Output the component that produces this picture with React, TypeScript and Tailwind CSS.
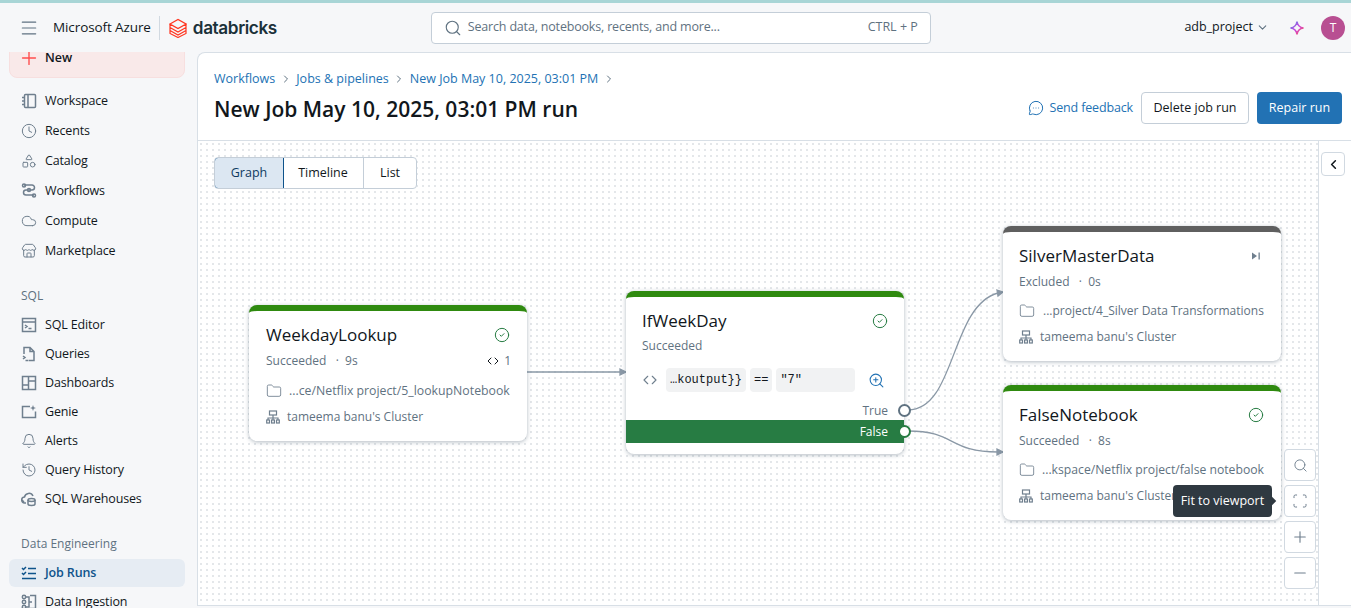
import { Menu, Plus, Clock, Shapes, Cloud, Store, Search, ChevronDown, ChevronRight, ChevronLeft, MessageCircleMore, CircleCheck, Folder, ChevronsLeftRight, ZoomIn, Minus, Bell, History, Code, Scan } from 'lucide-react'
import type { ReactNode } from 'react'

const stroke = { fill: 'none', stroke: 'currentColor', strokeWidth: 1.5 }

function Ico({ children }: { children: ReactNode }) {
  return <svg width="16" height="16" viewBox="0 0 16 16" {...stroke} className="shrink-0">{children}</svg>
}

const WorkspaceIcon = <Ico><rect x="3.5" y="1.5" width="11" height="13" rx="1" /><path d="M7 1.5v13M1 4.5h3M1 8h3M1 11.5h3" /></Ico>
const WorkflowsIcon = <Ico><path d="M3 2h8a2.500 2.500 0 0 1 0 5H5a2.500 2.500 0 0 0 0 5h8" /><circle cx="3" cy="2.500" r="1.500" /><circle cx="8" cy="7" r="1.500" /><circle cx="13" cy="12.500" r="1.500" /></Ico>
const SqlEditorIcon = <Ico><rect x="1.500" y="1.500" width="13" height="13" /><path d="M1.500 5h13M4 8l2 1.500L4 11M7.500 11.500h3" /></Ico>
const QueriesIcon = <Ico><path d="M3 8V1.500h6L13 5.500V14.500H8M9 1.500v4h4" /><path d="M2 10l2 1.500L2 13M4.500 14.500h3" /></Ico>
const DashboardsIcon = <Ico><rect x="1.500" y="1.500" width="13" height="13" /><path d="M7.500 1.500v13M1.500 10h6M7.500 6h7" /></Ico>
const GenieIcon = <Ico><path d="M9 2.500H1.500v11h13V7.500" /><path d="M12 1l.8 2.200L15 4l-2.200.8L12 7l-.8-2.200L9 4l2.200-.8z" fill="currentColor" stroke="none" /></Ico>
const WarehouseIcon = <Ico><path d="M5 12H4a3 3 0 0 1-.5-6A4.500 4.500 0 0 1 12 5" /><ellipse cx="10.500" cy="9" rx="3.500" ry="1.500" /><path d="M7 9v4c0 .8 1.500 1.500 3.500 1.500s3.500-.7 3.500-1.500V9" /><path d="M1 9l2 2" /></Ico>
const IngestionIcon = <Ico><circle cx="3" cy="3" r="1.700" /><circle cx="3" cy="8" r="1.700" /><circle cx="3" cy="13" r="1.700" /><path d="M9 1.500h5.500v13H9M5 3h3v10H5M8 8h3" /></Ico>
const JobRunsIcon = <Ico><path d="M1 3l1.500 1.500L5 2M1 8l1.500 1.500L5 7M7 3.500h8M7 8.500h8M1 13.500h14" /></Ico>

function NavItem({ icon, label, active }: { icon: ReactNode; label: string; active?: boolean }) {
  return (
    <div className={`flex h-7 items-center gap-2 rounded-md pl-3 text-[12.500px] tracking-[-0.15px] ${active ? 'bg-[#e6ecf3] font-semibold text-[#0e538b]' : 'text-[#11171c]'}`}>
      <span className={`flex w-4 justify-center ${active ? 'text-[#0e538b]' : 'text-[#6f7f8e]'}`}>{icon}</span>
      {label}
    </div>
  )
}

function Meta({ left, right }: { left: string; right?: ReactNode }) {
  return (
    <div className="mt-[2px] flex h-5 items-center justify-between text-[12px] text-[#5f7281]">
      <span>{left}</span>
      {right}
    </div>
  )
}

function NodeRow({ icon, text, cls }: { icon: ReactNode; text: string; cls: string }) {
  return (
    <div className="flex h-[26px] items-center text-[#5f7281]">
      <span className="w-[21px] shrink-0 text-[#6f7f8e]">{icon}</span>
      <span className={`whitespace-nowrap ${cls}`}>{text}</span>
    </div>
  )
}

const OkIcon = <CircleCheck size={16} strokeWidth={1.5} className="text-[#277c43]" />
const FolderIcon = <Folder size={16} strokeWidth={1.3} />
const ClusterIcon = (
  <svg width="14" height="14" viewBox="0 0 14 14" fill="none" stroke="currentColor" strokeWidth="1.200">
    <rect x="3.500" y="1" width="7" height="4" />
    <path d="M7 5v3M2 10V8h10v2M7 8v2" />
    <rect x="0.700" y="10" width="2.800" height="3" />
    <rect x="5.600" y="10" width="2.800" height="3" />
    <rect x="10.500" y="10" width="2.800" height="3" />
  </svg>
)

function ZoomBtn({ children }: { children: ReactNode }) {
  return <div className="flex h-8 w-8 items-center justify-center rounded border border-[#d1d9e1] bg-white text-[#6f7f8e]">{children}</div>
}

export default function App() {
  return (
    <div className="flex h-[608px] w-[1351px] flex-col overflow-hidden bg-[#f6f7f9] font-['Open_Sans',sans-serif] text-[#11171c]">
      <div className="h-[3px] shrink-0 bg-[#a8d5d6]" />

      <header className="flex h-[49px] shrink-0 items-center pl-[19px] pr-[6px]">
        <Menu size={20} strokeWidth={1.4} className="text-[#5f7281]" />
        <span className="ml-[14px] text-[13.500px] tracking-[-0.1px]">Microsoft Azure</span>
        <span className="mx-2 h-6 w-px bg-[#d1d9e1]" />
        <svg width="18" height="20" viewBox="0 0 18 20" className="ml-px shrink-0" fill="none" stroke="#ff3621" strokeWidth="1.200">
          <path d="M1 6l8-4.500L17 6l-8 4.500zM1 9.500l8 4.500 8-4.500M1 12.500l8 4.500 8-4.500M1 6v9.500l8 4 8-4V6" />
        </svg>
        <span className="ml-[6px] w-[86px] font-['Inter',sans-serif] text-[17.200px] font-semibold tracking-[-0.4px] text-[#1b3139]">databricks</span>
        <div className="ml-[152px] flex h-8 w-[500px] items-center rounded border border-[#c4ced8] bg-white pl-3 pr-3 text-[12.500px] text-[#5f7281]">
          <Search size={18} strokeWidth={1.500} />
          <span className="ml-[6px] flex-1 tracking-[-0.18px]">Search data, notebooks, recents, and more...</span>
          <span>CTRL + P</span>
        </div>
        <span className="ml-auto text-[12.500px]">adb_project</span>
        <ChevronDown size={13} className="ml-[3px] text-[#5f7281]" />
        <svg width="16" height="16" viewBox="0 0 16 16" fill="none" strokeWidth="1.600" className="ml-[20px]">
          <defs>
            <linearGradient id="spark" x1="0" y1="0" x2="1" y2="1">
              <stop offset="0" stopColor="#4299e0" />
              <stop offset="0.5" stopColor="#ca42e0" />
              <stop offset="1" stopColor="#ff5f46" />
            </linearGradient>
          </defs>
          <path d="M8 1.500C8.500 5.500 10.500 7.500 14.500 8C10.500 8.500 8.500 10.500 8 14.500C7.500 10.500 5.500 8.500 1.500 8C5.500 7.500 7.500 5.500 8 1.500Z" stroke="url(#spark)" />
        </svg>
        <span className="ml-[16px] flex h-6 w-6 items-center justify-center rounded-full bg-[#b84f92] text-[12px] text-white">T</span>
      </header>

      <div className="flex min-h-0 flex-1">
        <aside className="w-[197px] shrink-0 overflow-hidden pl-[9px] pr-[12px]">
          <div className="-mt-[14px] flex h-[40px] items-center gap-[5px] rounded-lg border border-[#f7dfdf] bg-[#f9e9e9] pl-2 text-[12.500px] font-semibold">
            <Plus size={22} strokeWidth={1.500} className="text-[#ff4d4d]" />
            New
          </div>
          <div className="mt-[9px]">
            <div className="flex flex-col gap-[2px]">
              <NavItem icon={WorkspaceIcon} label="Workspace" />
              <NavItem icon={<Clock size={16} strokeWidth={1.500} />} label="Recents" />
              <NavItem icon={<Shapes size={16} strokeWidth={1.500} />} label="Catalog" />
              <NavItem icon={WorkflowsIcon} label="Workflows" />
              <NavItem icon={<Cloud size={16} strokeWidth={1.500} />} label="Compute" />
              <NavItem icon={<Store size={16} strokeWidth={1.500} />} label="Marketplace" />
            </div>
            <div className="mt-[21px] mb-[5px] pl-3 text-[12px] leading-5 text-[#5f7281]">SQL</div>
            <div className="flex flex-col gap-px">
              <NavItem icon={SqlEditorIcon} label="SQL Editor" />
              <NavItem icon={QueriesIcon} label="Queries" />
              <NavItem icon={DashboardsIcon} label="Dashboards" />
              <NavItem icon={GenieIcon} label="Genie" />
              <NavItem icon={<Bell size={16} strokeWidth={1.500} />} label="Alerts" />
              <NavItem icon={<History size={16} strokeWidth={1.500} />} label="Query History" />
              <NavItem icon={WarehouseIcon} label="SQL Warehouses" />
            </div>
            <div className="mt-[21px] mb-[5px] pl-3 text-[12px] leading-5 text-[#5f7281]">Data Engineering</div>
            <div className="flex flex-col gap-px">
              <NavItem icon={JobRunsIcon} label="Job Runs" active />
              <NavItem icon={IngestionIcon} label="Data Ingestion" />
            </div>
          </div>
        </aside>

        <main className="mb-[2px] flex min-w-0 flex-1 flex-col overflow-hidden rounded-tl-lg border-t border-l border-b border-[#d8dfe6] bg-white">
          <div className="h-[88px] shrink-0 border-b border-[#d8dfe6] pl-4 pr-[9px] pt-4">
            <div className="flex items-center gap-[4.500px] text-[12.500px] leading-5 text-[#2272b4]">
              <span>Workflows</span>
              <ChevronRight size={12} className="text-[#5f7281]" />
              <span>Jobs &amp; pipelines</span>
              <ChevronRight size={12} className="text-[#5f7281]" />
              <span>New Job May 10, 2025, 03:01 PM</span>
              <ChevronRight size={12} className="text-[#5f7281]" />
            </div>
            <div className="mt-[3px] flex items-center">
              <h1 className="h-8 text-[21px] font-semibold leading-[34px]">New Job May 10, 2025, 03:01 PM run</h1>
              <div className="ml-auto flex items-center">
                <MessageCircleMore size={16} strokeWidth={1.500} className="text-[#2272b4]" />
                <span className="ml-[5px] text-[12.500px] tracking-[-0.15px] text-[#2272b4]">Send feedback</span>
                <button className="ml-2 h-8 w-[108px] rounded border border-[#c4ced8] bg-white text-[12.500px]">Delete job run</button>
                <button className="ml-2 h-8 w-[85px] rounded bg-[#2272b4] text-[12.500px] text-white">Repair run</button>
              </div>
            </div>
          </div>

          <div className="flex min-h-0 flex-1">
            <div className="relative flex-1 overflow-hidden border-r border-[#d8dfe6] bg-white bg-[radial-gradient(#e4e7ea_1px,transparent_1.200px)] bg-[length:6px_6px]">
              <div className="absolute left-4 top-4 flex h-8 overflow-hidden rounded border border-[#c4ced8] bg-white text-[12.500px]">
                <div className="-m-px flex w-[70px] items-center justify-center rounded-l border border-[#0e538b] bg-[#dce7f2] text-[#0e3a5f]">Graph</div>
                <div className="flex w-[81px] items-center justify-center border-r border-[#c4ced8]">Timeline</div>
                <div className="flex w-[52px] items-center justify-center">List</div>
              </div>

              <svg width="1120" height="464" className="absolute left-0 top-0" fill="none" stroke="#8a98a6" strokeWidth="1.300">
                <path d="M329 231H425" />
                <path d="M422 228l6 3-6 3z" fill="#8a98a6" />
                <path d="M710 269C758 269 752 165 800 152" />
                <path d="M799 149l6 2-5 4z" fill="#8a98a6" />
                <path d="M710 290C758 290 750 311 800 311" />
                <path d="M799 308l6 3-6 3z" fill="#8a98a6" />
              </svg>

              <div className="absolute left-[51px] top-[164px] h-[136px] w-[278px] overflow-hidden rounded-lg border-t-[6px] border-[#2f8a0f] bg-white pl-[17px] pr-4 pt-[10px] shadow-[0_1px_4px_rgba(60,80,100,0.4)]">
                <div className="flex h-[28px] items-center justify-between pr-[1px] text-[17px]">
                  <span>WeekdayLookup</span>
                  {OkIcon}
                </div>
                <Meta left={'Succeeded\u00a0\u00a0\u00a0·\u00a0\u00a09s'} right={<span className="flex items-center gap-[5px]"><Code size={12} className="text-[#11171c]" />1</span>} />
                <div className="mt-[7px]">
                  <NodeRow icon={FolderIcon} cls="pl-[2px] text-[12.300px]" text="...ce/Netflix project/5_lookupNotebook" />
                  <NodeRow icon={ClusterIcon} text="tameema banu's Cluster" cls="text-[12px]" />
                </div>
              </div>

              <div className="absolute left-[428px] top-[150px] h-[163px] w-[278px] rounded-lg border-t-[6px] border-[#2f8a0f] bg-white pt-[10px] shadow-[0_1px_4px_rgba(60,80,100,0.4)]">
                <div className="flex h-[28px] items-center justify-between pl-4 pr-4 text-[17px]">
                  <span>IfWeekDay</span>
                  {OkIcon}
                </div>
                <div className="mt-[1px] pl-4 text-[12px] leading-5 text-[#5f7281]">Succeeded</div>
                <div className="mt-[12px] flex items-center pl-[15px]">
                  <ChevronsLeftRight size={18} strokeWidth={1.500} className="text-[#6f7f8e]" />
                  <div className="ml-[7px] flex gap-[4px] font-['Liberation_Mono',monospace] text-[12px]">
                    <span className="flex h-6 items-center rounded bg-[#f1f2f3] px-1">{'…koutput}}'}</span>
                    <span className="flex h-6 items-center rounded bg-[#f1f2f3] px-1">==</span>
                    <span className="flex h-6 w-[79px] items-center rounded bg-[#f1f2f3] px-1">"7"</span>
                  </div>
                  <ZoomIn size={17} strokeWidth={1.500} className="ml-[13px] text-[#2272b4]" />
                </div>
                <div className="mt-[9px] flex h-5 items-center justify-end pr-4 text-[12px] text-[#5f7281]">True</div>
                <div className="-mt-px flex h-[23px] items-center justify-end bg-[#277c43] pr-4 text-[12px] font-medium text-white">False</div>
                <span className="absolute right-[-7px] top-[107px] h-[13px] w-[13px] rounded-full border-2 border-[#5f7281] bg-white" />
                <span className="absolute right-[-7px] top-[128px] h-[13px] w-[13px] rounded-full border-2 border-[#277c43] bg-white" />
              </div>

              <div className="absolute left-[805px] top-[85px] h-[135px] w-[278px] rounded-lg border-t-[6px] border-[#5f5f5f] bg-white px-4 pt-[10px] shadow-[0_1px_4px_rgba(60,80,100,0.4)]">
                <div className="flex h-[28px] items-center justify-between pr-[1px] text-[17px]">
                  <span>SilverMasterData</span>
                  <svg width="12" height="12" viewBox="0 0 12 12" fill="#6f7f8e" className="mr-[2px]"><path d="M2 2.500l5 3.500-5 3.500zM8.500 2.500h1.300v7H8.500z" /></svg>
                </div>
                <Meta left={'Excluded\u00a0\u00a0\u00a0·\u00a0\u00a00s'} />
                <div className="mt-[6px]">
                  <NodeRow icon={FolderIcon} cls="pl-[3px] text-[12px]" text="...project/4_Silver Data Transformations" />
                  <NodeRow icon={ClusterIcon} text="tameema banu's Cluster" cls="text-[12px]" />
                </div>
              </div>

              <div className="absolute left-[805px] top-[244px] h-[135px] w-[278px] rounded-lg border-t-[6px] border-[#2f8a0f] bg-white px-4 pt-[10px] shadow-[0_1px_4px_rgba(60,80,100,0.4)]">
                <div className="flex h-[28px] items-center justify-between pr-[1px] text-[17px]">
                  <span>FalseNotebook</span>
                  {OkIcon}
                </div>
                <Meta left={'Succeeded\u00a0\u00a0\u00a0·\u00a0\u00a08s'} />
                <div className="mt-[6px]">
                  <NodeRow icon={FolderIcon} cls="pl-[2px] text-[12.200px]" text="...kspace/Netflix project/false notebook" />
                  <NodeRow icon={ClusterIcon} text="tameema banu's Cluster" cls="text-[12px]" />
                </div>
              </div>

              <div className="absolute left-[1086px] top-[308px] flex flex-col gap-1">
                <ZoomBtn><Search size={15} strokeWidth={1.500} /></ZoomBtn>
                <ZoomBtn><Scan size={16} strokeWidth={1.500} /></ZoomBtn>
                <ZoomBtn><Plus size={18} strokeWidth={1.500} /></ZoomBtn>
                <ZoomBtn><Minus size={18} strokeWidth={1.500} /></ZoomBtn>
              </div>

              <div className="absolute left-[975px] top-[344px] flex h-8 w-[99px] items-center justify-center rounded bg-[#2f3941] text-[12.500px] text-white">
                Fit to viewport
                <span className="absolute right-[-3px] top-[13px] h-[6px] w-[6px] rotate-45 bg-[#2f3941]" />
              </div>
            </div>

            <div className="relative w-[32px] shrink-0">
              <div className="absolute left-[2px] top-[11px] flex h-6 w-6 items-center justify-center rounded border border-[#d1d9e1] bg-white">
                <ChevronLeft size={15} strokeWidth={2.500} />
              </div>
            </div>
          </div>
        </main>
      </div>
    </div>
  )
}
